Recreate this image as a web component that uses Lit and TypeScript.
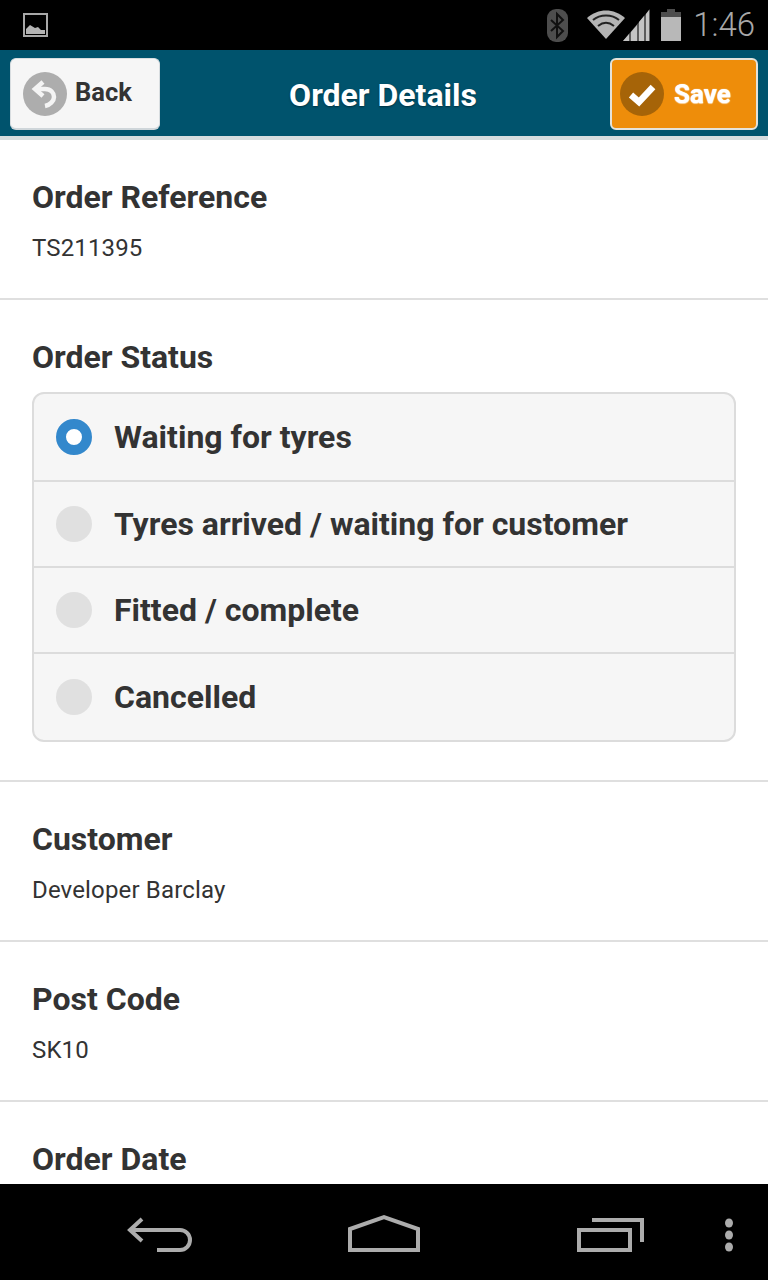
import { LitElement, html, css, svg } from "lit";
import { customElement } from "lit/decorators.js";

@customElement("app-root")
export class AppRoot extends LitElement {
  static styles = css`
    :host { display: block; width: 768px; height: 1280px; font-family: Roboto, "Liberation Sans", sans-serif; color: #333; background: #fff; }
    * { box-sizing: border-box; }
    .page { width: 768px; height: 1280px; display: flex; flex-direction: column; overflow: hidden; }
    .status { height: 50px; flex: none; background: #000; display: flex; align-items: center; padding: 0 13px 0 22px; }
    .status svg { display: block; flex: none; }
    .spacer { flex: 1; }
    .bt { margin-right: 19px; }
    .batt { margin-left: 11px; }
    .clock { font-size: 33px; font-weight: 300; color: #a8a8a8; margin-left: 12px; line-height: 50px; }
    .bar { height: 90px; flex: none; background: #00536d; border-bottom: 4px solid #d6dcde; padding: 8px 10px 0; display: flex; align-items: flex-start; justify-content: space-between; position: relative; }
    .btn { height: 72px; border-radius: 6px; display: flex; align-items: center; padding-left: 12px; font-size: 26px; font-weight: 700; }
    .back { width: 150px; background: #f6f6f6; border: 1px solid #d8dde0; border-bottom: 2px solid #cfd6da; color: #333; gap: 8px; font-size: 25.5px; }
    .back span { padding-bottom: 3px; }
    .save { width: 148px; background: #ee8d0a; border: 2px solid #e4e2da; color: #fff; gap: 10px; padding-left: 8px; text-shadow: 0 1px 1px rgba(255,255,255,.6), 0 0 1px #fff; }
    .btn svg { display: block; flex: none; }
    .title { position: absolute; left: -2px; right: 0; top: 0; height: 86px; display: flex; align-items: center; justify-content: center; color: #fff; font-size: 32px; font-weight: 700; text-shadow: 0 1px 2px #00303f; pointer-events: none; padding-top: 4px; }
    .content { flex: 1; min-height: 0; overflow: hidden; }
    .sec { border-bottom: 2px solid #dfdfdf; padding: 39px 32px 0; height: 160px; }
    .sec.status-sec { height: 482px; }
    .sec.last { border-bottom: none; }
    .label { font-size: 32px; font-weight: 700; line-height: 36px; color: #333; }
    .val { font-size: 24px; line-height: 30px; margin-top: 18px; color: #333; letter-spacing: 0.15px; }
    .group { margin-top: 17px; width: 704px; height: 350px; border: 2px solid #dcdcdc; border-radius: 12px; background: #f6f6f6; overflow: hidden; }
    .opt { height: 86px; display: flex; align-items: center; padding-left: 22px; gap: 22px; font-size: 32px; font-weight: 700; border-bottom: 2px solid #dcdcdc; color: #333; }
    .opt:first-child { height: 88px; }
    .opt:last-child { border-bottom: none; height: 86px; }
    .radio { width: 36px; height: 36px; border-radius: 50%; background: #e0e0e0; flex: none; }
    .radio.on { background: #fff; border: 10px solid #3388cc; }
    .nav { height: 96px; flex: none; background: #000; position: relative; }
    .nav svg { position: absolute; left: 0; top: 0; }
  `;

  private options = ["Waiting for tyres", "Tyres arrived / waiting for customer", "Fitted / complete", "Cancelled"];

  render() {
    return html`<div class="page">
      <div class="status">
        <svg width="28" height="28" viewBox="0 0 28 28">
          <rect x="2" y="3" width="23" height="22" fill="none" stroke="#a8a8a8" stroke-width="2"/>
          <path d="M4 23v-5l4-4 5 3 3-1 3 3 4 0v4z" fill="#b4b4b4"/>
        </svg>
        <div class="spacer"></div>
        <svg class="bt" width="21" height="33" viewBox="0 0 21 33">
          <rect x="0" y="0" width="21" height="33" rx="9" fill="#4d4d4d"/>
          <path d="M4 11l12 11-6 6V5l6 6L4 22" fill="none" stroke="#111" stroke-width="2"/>
        </svg>
        <svg width="63" height="33" viewBox="0 0 63 33">
          <path d="M0 9C11-1 27-1 38 9L19 30z" fill="#b4b4b4"/>
          <path d="M6 11C13 5 25 5 32 11M11 17C16 13 22 13 27 17" fill="none" stroke="#222" stroke-width="2"/>
          <path d="M36 32L63 0v32z" fill="#5c5c5c"/>
          <path d="M36 32l6-7v7zM44 32V23l6-7v16zM52 32V13l5-6v25zM59 32V5l3-4v31z" fill="#c4c4c4"/>
        </svg>
        <svg class="batt" width="20" height="32" viewBox="0 0 20 32">
          <path d="M6 0h8v3h6v29H0V3h6z" fill="#4d4d4d"/>
          <rect x="0" y="8" width="20" height="24" fill="#b8b8b8"/>
        </svg>
        <span class="clock">1:46</span>
      </div>
      <div class="bar">
        <div class="btn back">
          <svg width="44" height="44" viewBox="0 0 44 44">
            <circle cx="22" cy="22" r="22" fill="#adadad"/>
            <path d="M20 10l-8 7 8 7" fill="none" stroke="#f4f4f4" stroke-width="4.5"/>
            <path d="M13 17h9c6 0 9 4 9 8s-4 8-9 9" fill="none" stroke="#f4f4f4" stroke-width="4.5"/>
          </svg>
          <span>Back</span>
        </div>
        <div class="btn save">
          <svg width="44" height="44" viewBox="0 0 44 44">
            <circle cx="22" cy="22" r="22" fill="#a66408"/>
            <path d="M11 23l8 7 14-15" fill="none" stroke="#fff" stroke-width="6.5"/>
          </svg>
          <span>Save</span>
        </div>
        <div class="title">Order Details</div>
      </div>
      <div class="content">
        <div class="sec"><div class="label">Order Reference</div><div class="val">TS211395</div></div>
        <div class="sec status-sec">
          <div class="label">Order Status</div>
          <div class="group">
            ${this.options.map((o, i) => html`<div class="opt"><span class="radio ${i === 0 ? "on" : ""}"></span><span>${o}</span></div>`)}
          </div>
        </div>
        <div class="sec"><div class="label">Customer</div><div class="val">Developer Barclay</div></div>
        <div class="sec"><div class="label">Post Code</div><div class="val">SK10</div></div>
        <div class="sec last"><div class="label">Order Date</div></div>
      </div>
      <div class="nav">
        <svg width="768" height="96" viewBox="0 1184 768 96" fill="none" stroke="#acacac" stroke-width="4">
          <path d="M142 1219L130 1230L142 1241"/>
          <path d="M130 1230H180a10 10 0 0 1 0 20H157"/>
          <path d="M350 1250V1229L384 1217L418 1229V1250Z"/>
          <rect x="579" y="1230" width="51" height="20"/>
          <path d="M592 1220H642V1242"/>
          ${svg`<g fill="#acacac" stroke="none"><ellipse cx="729" cy="1223" rx="4" ry="4.5"/><ellipse cx="729" cy="1235" rx="4" ry="4.5"/><ellipse cx="729" cy="1247" rx="4" ry="4.5"/></g>`}
        </svg>
      </div>
    </div>`;
  }
}
